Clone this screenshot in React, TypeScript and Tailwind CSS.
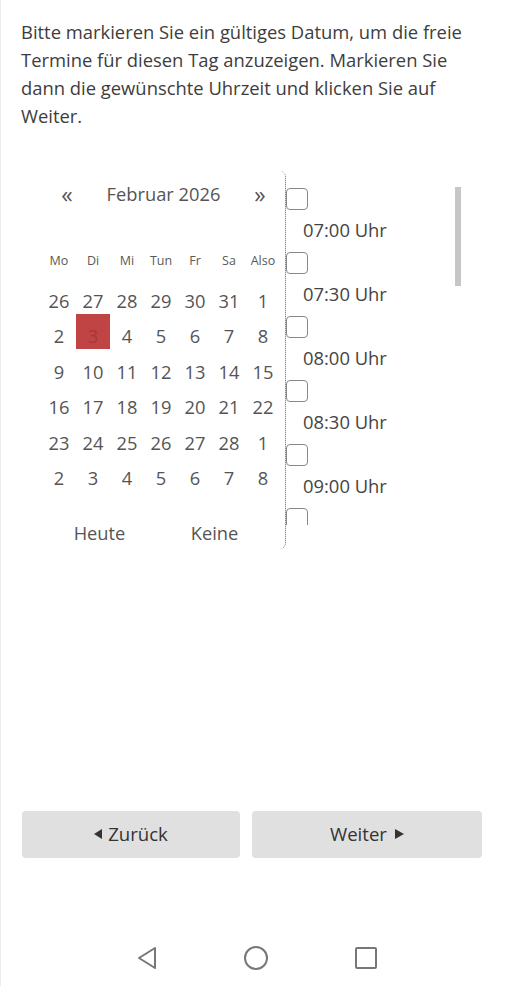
const weekdays = ["Mo", "Di", "Mi", "Tun", "Fr", "Sa", "Also"];

const days = [
  [26, 27, 28, 29, 30, 31, 1],
  [2, 3, 4, 5, 6, 7, 8],
  [9, 10, 11, 12, 13, 14, 15],
  [16, 17, 18, 19, 20, 21, 22],
  [23, 24, 25, 26, 27, 28, 1],
  [2, 3, 4, 5, 6, 7, 8],
];

const slots = ["07:00 Uhr", "07:30 Uhr", "08:00 Uhr", "08:30 Uhr", "09:00 Uhr"];

function Calendar() {
  return (
    <div className="w-[250px] shrink-0 rounded-r-md border-r border-dotted border-[#666] pl-[6px] text-[#555]">
      <div className="flex h-[46px] items-center text-[18.3px]">
        <span className="w-[50px] text-center text-[23px] leading-[20px]">«</span>
        <span className="w-[143px] text-center">Februar 2026</span>
        <span className="w-[50px] text-center text-[23px] leading-[20px]">»</span>
      </div>
      <div className="flex h-[61px] items-end pb-[9px] text-[12.5px] leading-[17px] text-[#5a5a5a]">
        {weekdays.map((d) => (
          <span key={d} className="w-[34px] text-center">
            {d}
          </span>
        ))}
      </div>
      {days.map((row, r) => (
        <div key={r} className="flex h-[35.5px] text-[18.3px]">
          {row.map((d, c) => {
            const selected = r === 1 && c === 1;
            return (
              <span
                key={c}
                className={`w-[34px] pt-[9.5px] text-center leading-[26px] ${
                  selected ? "bg-[#c04444] text-[#a23a3a]" : ""
                }`}
              >
                {d}
              </span>
            );
          })}
        </div>
      ))}
      <div className="flex pb-[2.5px] pt-[28px] text-[18.3px] leading-[27px]">
        <span className="w-[115px] text-center">Heute</span>
        <span className="w-[115px] text-center">Keine</span>
      </div>
    </div>
  );
}

function TimeSlots() {
  return (
    <div className="relative mt-[16px] h-[338px] w-[177px] self-start overflow-hidden">
      <div className="pt-[0.5px]">
        {slots.map((s) => (
          <div key={s} className="pb-[8px]">
            <div className="h-[22px] w-[22px] rounded-[4px] border-[1.5px] border-[#888] bg-white" />
            <div className="mt-[6px] pl-[17px] text-[18.4px] leading-[28px] text-[#444]">{s}</div>
          </div>
        ))}
        <div className="h-[22px] w-[22px] rounded-[4px] border-[1.5px] border-[#888] bg-white" />
      </div>
      <div className="absolute right-[2px] top-0 h-[99px] w-[6px] bg-[#c6c6c6]" />
    </div>
  );
}

export default function App() {
  return (
    <div
      className="relative flex min-h-[986px] w-full flex-col border-l border-[#ececec] bg-white"
      style={{ fontFamily: '"Open Sans", "Noto Sans", sans-serif' }}
    >
      <p className="px-[20px] pt-[18px] text-[18.4px] leading-[28px] text-[#3d3d3d]">
        Bitte markieren Sie ein gültiges Datum, um die freie Termine für diesen Tag anzuzeigen.
        Markieren Sie dann die gewünschte Uhrzeit und klicken Sie auf Weiter.
      </p>

      <div className="mt-[41px] flex pl-[35px]">
        <Calendar />
        <TimeSlots />
      </div>

      <div className="mt-[262px] flex gap-[12px] pl-[21px] pr-[28px] text-[18.6px] text-[#333]">
        <button className="flex h-[47px] w-[218px] items-center justify-center gap-[6px] rounded-[4px] bg-[#e0e0e0]">
          <svg width="8" height="10" viewBox="0 0 8 10">
            <path d="M8 0 L0 5 L8 10 Z" fill="#333" />
          </svg>
          Zurück
        </button>
        <button className="flex h-[47px] w-[230px] items-center justify-center gap-[8px] rounded-[4px] bg-[#e0e0e0]">
          Weiter
          <svg width="9" height="10" viewBox="0 0 9 10">
            <path d="M0 0 L9 5 L0 10 Z" fill="#333" />
          </svg>
        </button>
      </div>

      <div className="mt-auto flex h-[56px] items-center justify-center gap-[85px] pl-[2px]">
        <svg width="22" height="24" viewBox="0 0 22 24">
          <path d="M19 2 L3 12 L19 22 Z" fill="none" stroke="#777" strokeWidth="2" strokeLinejoin="round" />
        </svg>
        <svg width="26" height="26" viewBox="0 0 26 26">
          <circle cx="13" cy="13" r="11" fill="none" stroke="#777" strokeWidth="2" />
        </svg>
        <svg width="24" height="24" viewBox="0 0 24 24">
          <rect x="2" y="2" width="20" height="20" rx="1" fill="none" stroke="#777" strokeWidth="2" />
        </svg>
      </div>
    </div>
  );
}
